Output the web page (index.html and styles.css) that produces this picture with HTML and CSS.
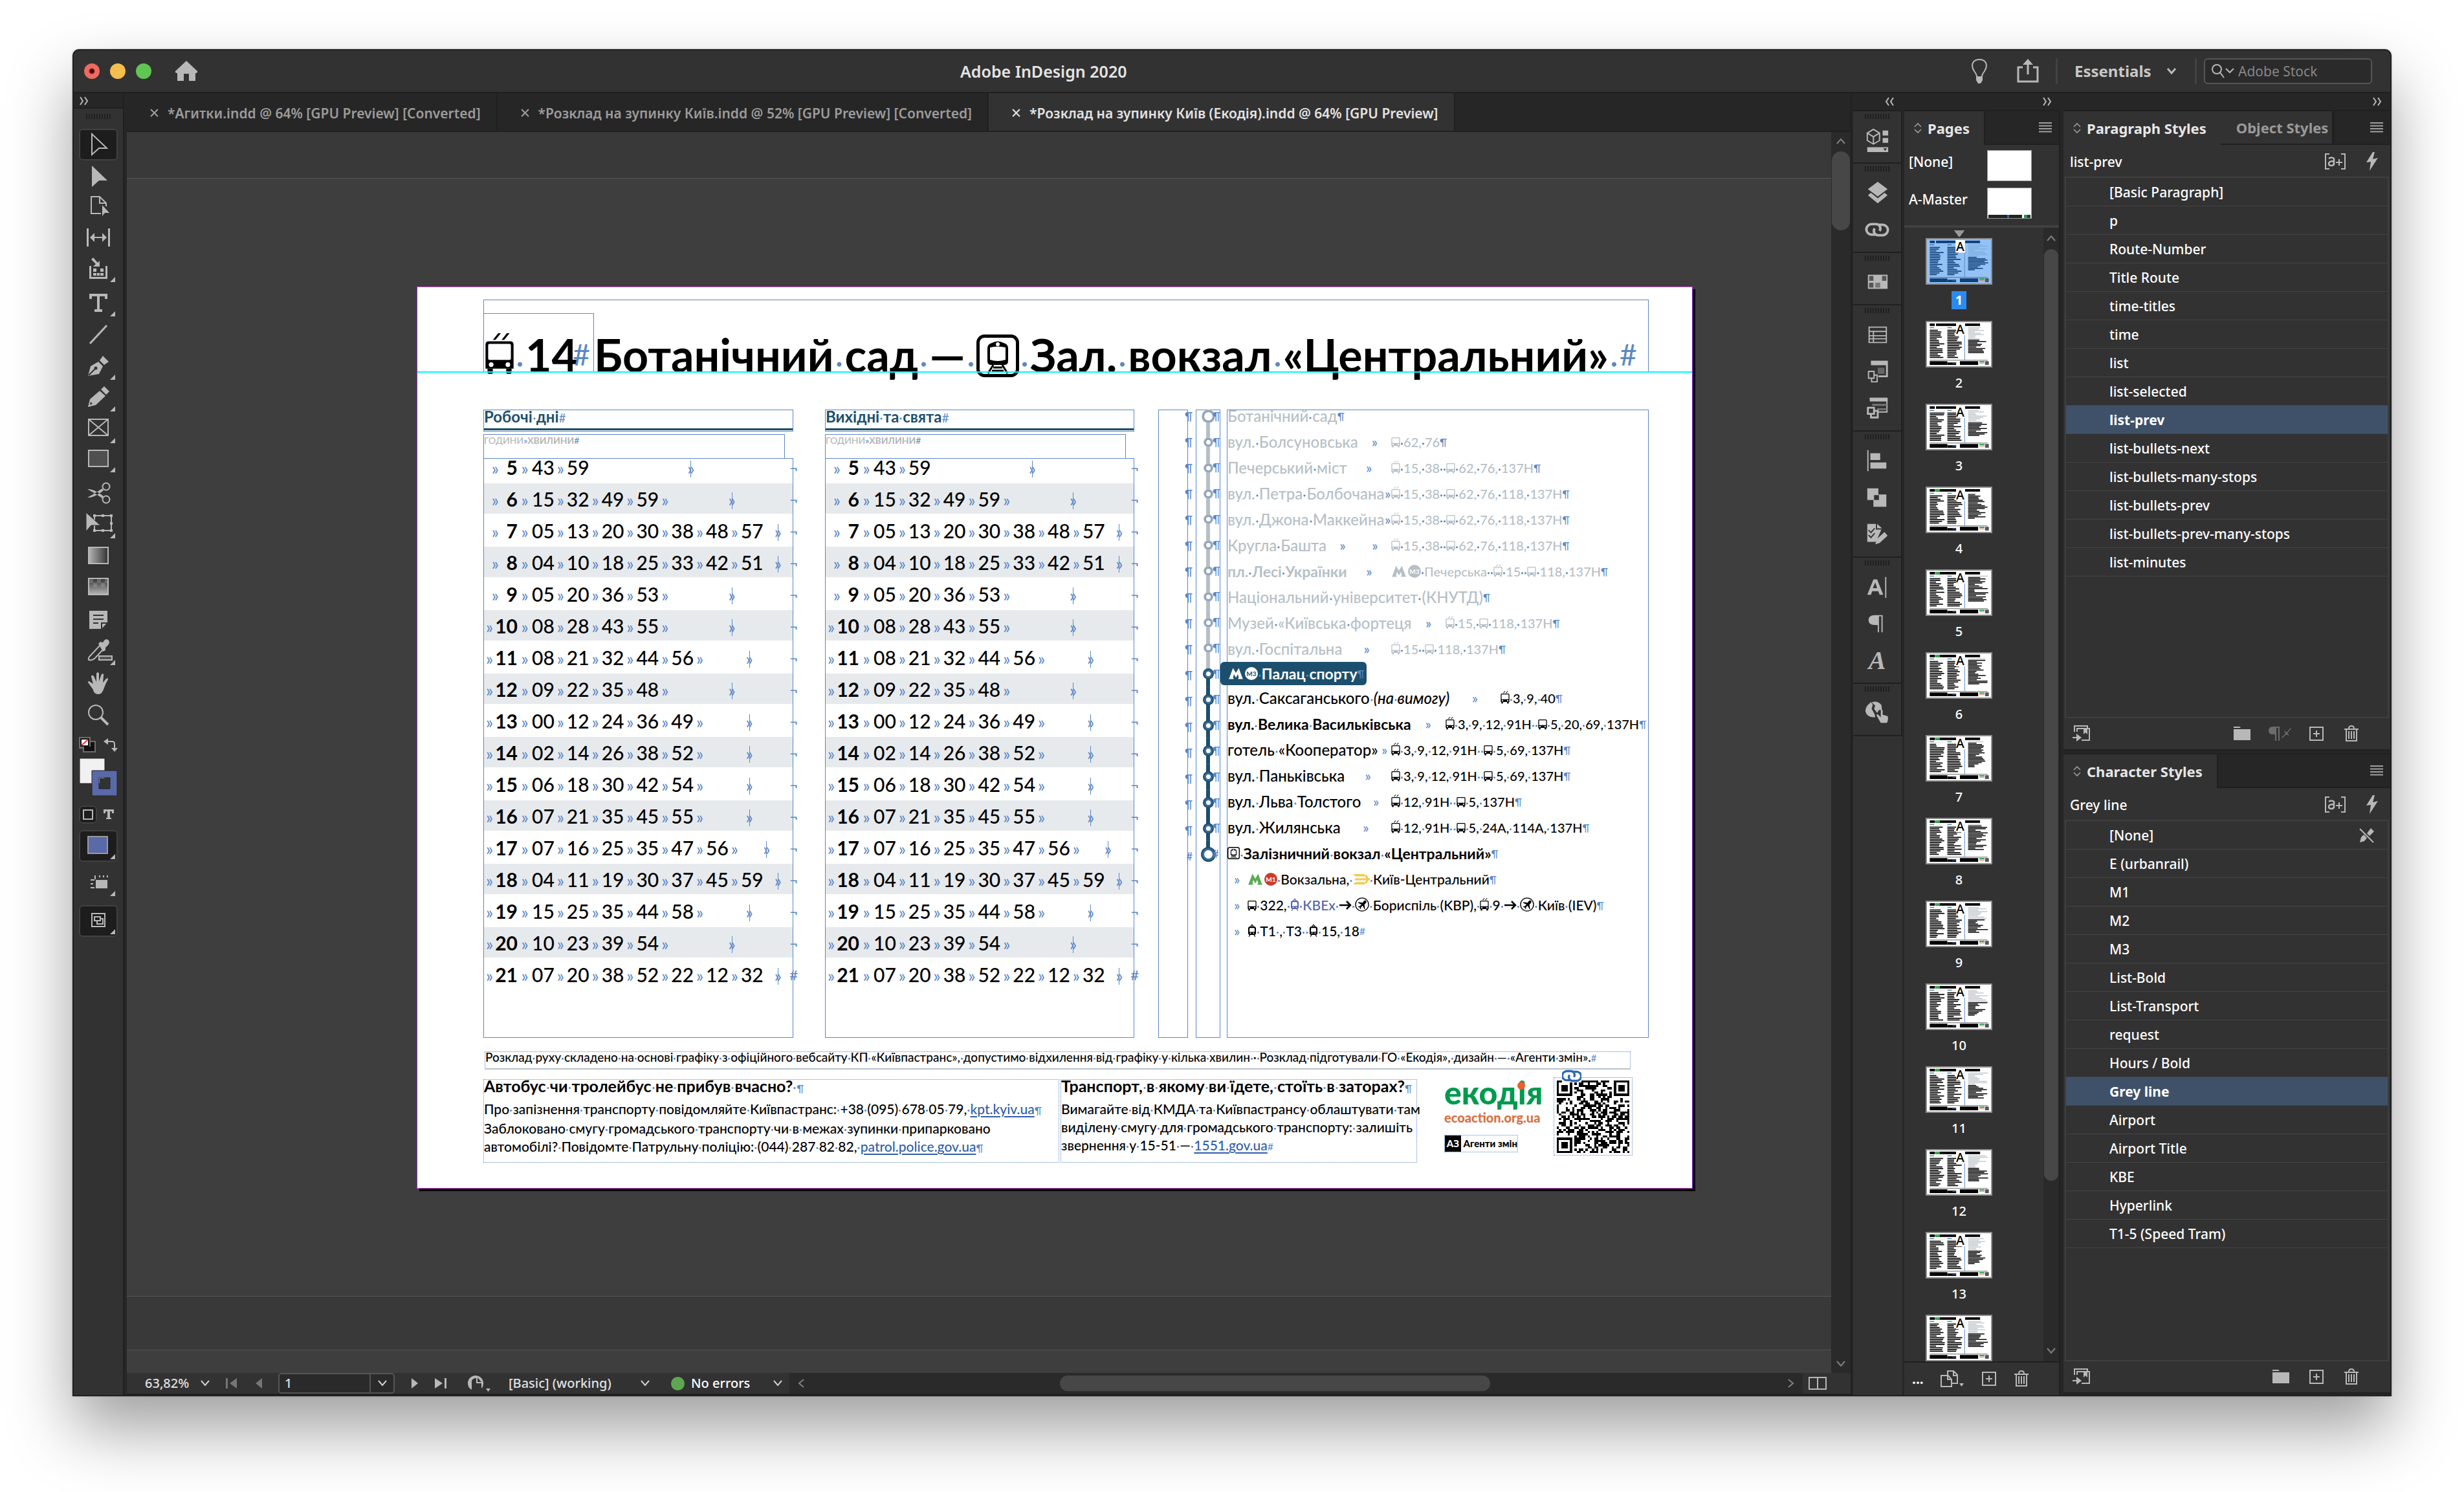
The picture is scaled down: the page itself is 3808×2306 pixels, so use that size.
FILE: index.html
```html
<!DOCTYPE html>
<html lang="uk">
<head>
<meta charset="utf-8">
<title>Adobe InDesign 2020</title>
<link rel="stylesheet" href="styles.css">
</head>
<body>
<svg class="defs" aria-hidden="true">
  <symbol id="chev" viewBox="0 0 16 16"><path d="M2 4l6 7 6-7" fill="none" stroke="currentColor" stroke-width="2"/></symbol>
  <symbol id="dbl" viewBox="0 0 16 16"><path d="M2 2l4 6-4 6M9 2l4 6-4 6" fill="none" stroke="currentColor" stroke-width="2"/></symbol>
  <symbol id="updown" viewBox="0 0 12 18"><path d="M1 7l5-5 5 5M1 11l5 5 5-5" fill="none" stroke="currentColor" stroke-width="1.6"/></symbol>
  <symbol id="menu" viewBox="0 0 20 16"><path d="M0 1h20M0 5.500h20M0 10h20M0 14.500h20" stroke="currentColor" stroke-width="2"/></symbol>
  <symbol id="close" viewBox="0 0 12 12"><path d="M1 1l10 10M11 1L1 11" stroke="currentColor" stroke-width="2"/></symbol>
  <symbol id="aplus" viewBox="0 0 34 26"><path d="M8 1H2v23h6M26 1h6v23h-6M23 9v10M18 14h10" fill="none" stroke="currentColor" stroke-width="2"/><path d="M7 8q4-3 8 0v10M15 12q-8 0-8 3.500t4 3.500 4-4" fill="none" stroke="currentColor" stroke-width="2.500"/></symbol>
  <symbol id="bolt" viewBox="0 0 20 30"><path d="M11 0L1 16l7-1-2 14L19 9l-8 2 3-11z" fill="currentColor"/></symbol>
  <symbol id="plus" viewBox="0 0 24 24"><path d="M2 2h20v20H2zM12 7v10M7 12h10" fill="none" stroke="currentColor" stroke-width="2"/></symbol>
  <symbol id="trash" viewBox="0 0 24 26"><path d="M1 6h22M8 5q0-4 4-4t4 4M4 7v17h16V7M8 9v12M12 9v12M16 9v12" fill="none" stroke="currentColor" stroke-width="2"/></symbol>
  <symbol id="folder" viewBox="0 0 26 22"><path d="M0 0h9l2 2H0zM0 4h26v17H0z" fill="currentColor"/></symbol>
  <symbol id="import" viewBox="0 0 28 28"><path d="M3 11V2h20v3M7 11V6h19v18H14M0 20h8" fill="none" stroke="currentColor" stroke-width="2"/><path d="M6 14l8 6-8 6zM17 6h6v9l-3-3-3 3z" fill="currentColor"/></symbol>
  <symbol id="link" viewBox="0 0 40 28"><g fill="none" stroke="currentColor" stroke-width="4"><path d="M17 22h-6a8 8 0 0 1 0-17h7a7 7 0 0 1 6 11"/><path d="M23 6h6a8 8 0 0 1 0 17h-7a7 7 0 0 1-6-11"/></g></symbol>
  <symbol id="buscab" viewBox="0 0 44 62"><path fill="currentColor" fill-rule="evenodd" d="M6 12h32q5 0 5 5v36H1V17q0-5 5-5zM5 18v20q0 2 2 2h30q2 0 2-2V18q0-2-2-2H7q-2 0-2 2zM6 47a3.500 3.500 0 1 0 7 0 3.500 3.500 0 1 0-7 0zM31 47a3.500 3.500 0 1 0 7 0 3.500 3.500 0 1 0-7 0z"/><path fill="currentColor" d="M4 53h8v6q0 2-4 2t-4-2zM32 53h8v6q0 2-4 2t-4-2z"/></symbol>
  <symbol id="trolley" viewBox="0 0 44 62"><path d="M12 10l8-10h4l-8 10zM25 10l8-10h4l-8 10z" fill="currentColor"/><use href="#buscab"/></symbol>
  <symbol id="bus" viewBox="0 0 44 62"><use href="#buscab"/></symbol>
  <symbol id="tram" viewBox="0 0 44 66"><path fill="none" stroke="currentColor" stroke-width="4" d="M15 12l7-8 7 8M12 55L6 65M32 55l6 10"/><path fill="currentColor" fill-rule="evenodd" d="M12 12h20q10 2 10 12v24q0 8-8 8H10q-8 0-8-8V24q0-10 10-12zM10 21l-2 18q8 4 28 0l-2-18zM11 47a3 3 0 1 0 6 0 3 3 0 1 0-6 0zM27 47a3 3 0 1 0 6 0 3 3 0 1 0-6 0z"/></symbol>
  <symbol id="station" viewBox="0 0 66 66"><rect x="2.500" y="2.500" width="61" height="61" rx="10" fill="none" stroke="currentColor" stroke-width="5"/><path fill="currentColor" fill-rule="evenodd" d="M24 13q9-5 18 0 7 2 7 8v20q0 6-6 6H23q-6 0-6-6V21q0-6 7-8zM21 20v19q12 4 24 0V20q-12-3-24 0zM30 15a3 3 0 1 0 6 0 3 3 0 1 0-6 0z"/><path stroke="currentColor" stroke-width="3" fill="none" d="M26 47l-8 13M40 47l8 13M26 51h14M24 56h18"/></symbol>
  <symbol id="metro" viewBox="0 0 44 36"><path fill="currentColor" d="M0 35l2-4L13 1l9 15L31 1l11 30 2 4H29v-3l2-1-3-11-6 11-6-11-3 11 2 1v3z"/></symbol>
  <symbol id="plane" viewBox="0 0 24 24"><circle cx="12" cy="12" r="11" fill="none" stroke="currentColor" stroke-width="1.500"/><path d="M18 5q-2 0-3 1l-2 3-7-1-1 1 6 3-3 3-2 0-1 1 3 1 1 3 1-1 0-2 3-3 3 6 1-1-1-7 3-3q1-2-1-4z" fill="currentColor"/></symbol>
  <symbol id="arrow" viewBox="0 0 20 16"><path d="M1 8h17M12 2l6 6-6 6" fill="none" stroke="currentColor" stroke-width="2.500"/></symbol>
  <symbol id="rail" viewBox="0 0 26 16"><path d="M0 0h17l4 3.500H4zM4 6.500h22v3H2zM4 12.500h17L17 16H0z" fill="currentColor"/><path d="M20 2l3 6-3 6" fill="none" stroke="currentColor" stroke-width="3"/></symbol>
</svg>

<div class="window">
  <header class="titlebar">
    <div class="titlebar-left">
      <button class="light red" aria-label="Close window"></button>
      <button class="light yellow" aria-label="Minimise"></button>
      <button class="light green" aria-label="Zoom window"></button>
      <button class="home" aria-label="Home"><svg width="36" height="32" viewBox="0 0 36 32"><path fill="currentColor" d="M18 0l17 16q1 3-3 3v12H22V20h-8v11H4V19q-4 0-3-3z"/></svg></button>
    </div>
    <h1 class="app-title">Adobe InDesign 2020</h1>
    <div class="titlebar-right">
      <button class="bulb" aria-label="Learn"><svg width="28" height="38" viewBox="0 0 28 38"><path d="M10 28q0-4-4-9C-1 7 6 1 14 1s15 6 8 18q-4 5-4 9" fill="none" stroke="currentColor" stroke-width="2"/><path d="M9 27h10v6l-3 5h-4l-3-5z" fill="currentColor"/></svg></button>
      <button class="share" aria-label="Share"><svg width="34" height="38" viewBox="0 0 34 38"><path d="M9 13H2v22h30V13h-7M17 24V6" fill="none" stroke="currentColor" stroke-width="3"/><path d="M17 0l8 9H9z" fill="currentColor"/></svg></button>
      <i class="sep"></i>
      <select class="workspace" aria-label="Workspace"><option>Essentials</option></select>
      <svg class="ic16" viewBox="0 0 16 16"><path d="M2 4l6 7 6-7" fill="none" stroke="currentColor" stroke-width="3"/></svg>
      <i class="sep sep2"></i>
      <label class="search"><svg width="40" height="24" viewBox="0 0 40 24"><circle cx="10" cy="9" r="7" fill="none" stroke="currentColor" stroke-width="2"/><path d="M15 14l6 8M24 8l6 6 6-6" fill="none" stroke="currentColor" stroke-width="2"/></svg><input type="text" placeholder="Adobe Stock" aria-label="Search Adobe Stock"></label>
    </div>
  </header>

  <div class="work">
    <nav class="tools" aria-label="Tools">
      <div class="tools-head"><svg class="ic16"><use href="#dbl"/></svg></div>
      <i class="grip"></i>
      <button class="tool on" aria-label="Selection"><svg viewBox="0 0 60 49"><path d="M20 8v32l11-10h12z" class="st"/></svg></button>
      <button class="tool" aria-label="Direct selection"><svg viewBox="0 0 60 49"><path d="M20 8v33l11-10h13z"/></svg></button>
      <button class="tool" aria-label="Page"><svg viewBox="0 0 60 49"><path d="M34 33H19V7h13l10 10v5M32 7v10h10" class="st"/><path d="M36 20v17l4-5h7z"/></svg></button>
      <button class="tool" aria-label="Gap"><svg viewBox="0 0 60 49"><path d="M12 7h3v28h-3zM45 7h3v28h-3zM17 21l7-7v6h12v-6l7 7-7 7v-6H24v6z"/></svg></button>
      <button class="tool" aria-label="Content collector"><svg viewBox="0 0 60 49"><path d="M16 16h3v17h22V16h3v20H16zM22 20h5v5h-5zM33 20h5v5h-5zM22 27h5v4h-5zM28 27h4v4h-4zM33 27h5v4h-5zM19 6l3-3 7 8 3-3v9H22l4-4z"/><path d="M56 33v8h-8z"/></svg></button>
      <button class="tool" aria-label="Type"><svg viewBox="0 0 60 49"><path d="M16 10h28v8h-4v-4h-8v20h4v4H24v-4h4V14h-8v4h-4z"/><path d="M56 37v8h-8z"/></svg></button>
      <button class="tool" aria-label="Line"><svg viewBox="0 0 60 49"><path d="M17 38L43 10" class="st w3"/></svg></button>
      <button class="tool" aria-label="Pen"><svg viewBox="0 0 60 49"><path d="M14 39l4-15 12-7 7 7-6 12zM32 15l5-7 9 9-7 5z"/><path d="M15 38l10-10" stroke="#323232" stroke-width="2"/><circle cx="26" cy="27" r="2.500" fill="#323232"/><path d="M56 37v8h-8z"/></svg></button>
      <button class="tool" aria-label="Pencil"><svg viewBox="0 0 60 49"><path d="M14 38l3-12L32 13l9 8-15 14zM34 11l5-5 8 8-5 5z"/><path d="M17 35l1-5 3 3z" fill="#323232"/><path d="M56 37v8h-8z"/></svg></button>
      <button class="tool" aria-label="Frame"><svg viewBox="0 0 60 49"><path d="M15 8h30v25H15zM15 8l30 25M45 8L15 33" class="st"/><path d="M56 37v8h-8z"/></svg></button>
      <button class="tool" aria-label="Rectangle"><svg viewBox="0 0 60 49"><path d="M16 8h28v23H16z" fill="#505050"/><path d="M15 7h30v25H15z" class="st"/><path d="M56 33v8h-8z"/></svg></button>
      <button class="tool" aria-label="Scissors"><svg viewBox="0 0 60 49"><circle cx="42" cy="14" r="5.500" class="st"/><circle cx="42" cy="34" r="5.500" class="st"/><path d="M13 18q10-1 25 11l-2 3Q24 24 13 18zM13 31q10 1 25-11l-2-3Q24 25 13 31z"/></svg></button>
      <button class="tool" aria-label="Free transform"><svg viewBox="0 0 60 49"><path d="M24 10h26v23H24z" class="st"/><path d="M11 5v29l8-9h14z" stroke="#323232"/><path d="M22 8h4v4h-4zM35 8h4v4h-4zM48 8h4v4h-4zM48 20h4v4h-4zM48 31h4v4h-4zM35 31h4v4h-4zM22 31h4v4h-4zM56 37v8h-8z"/></svg></button>
      <button class="tool" aria-label="Gradient swatch"><svg viewBox="0 0 60 49"><linearGradient id="g1"><stop stop-color="#b5b5b5"/><stop offset="1" stop-color="#333"/></linearGradient><path d="M15 10h30v25H15z" fill="url(#g1)"/><path d="M15 10h30v25H15z" class="st"/></svg></button>
      <button class="tool" aria-label="Gradient feather"><svg viewBox="0 0 60 49"><linearGradient id="g2" x2="0" y2="1"><stop stop-color="#333"/><stop offset="1" stop-color="#b5b5b5"/></linearGradient><path d="M15 9h30v25H15z" fill="url(#g2)"/><path d="M15 9h30v25H15z" class="st"/><path d="M16 10h6v6h-6zM28 10h6v6h-6zM22 16h6v6h-6zM34 16h6v6h-6zM40 10h4v6h-4z" opacity=".3"/></svg></button>
      <button class="tool" aria-label="Note"><svg viewBox="0 0 60 49"><path d="M16 10h28v18l-9 10H16z"/><path d="M22 17h16M22 23h16M22 29h8M35 38v-9h9" stroke="#323232" stroke-width="2" fill="none"/></svg></button>
      <button class="tool" aria-label="Eyedropper"><svg viewBox="0 0 60 49"><path d="M33 14L16 32q-3 6 1 5 4 1 8-3l14-15" class="st"/><path d="M30 12l3-3 4 1q4-7 8-4t0 8l-4 4v4l-4 2z"/><path d="M31 31h20v6H31z" fill="#555"/><path d="M31 31h20v6H31z" class="st"/><path d="M56 37v8h-8z"/></svg></button>
      <button class="tool" aria-label="Hand"><svg viewBox="0 0 60 49"><path d="M22 34L15 24q-3-3 1-3l6 4-3-11q0-4 4-1l4 9V9q2-4 4 0v12l4-11q4-2 3 2l-1 11 5-6q4-2 3 1-4 7-6 13-3 10-9 10-7 0-8-7z"/></svg></button>
      <button class="tool" aria-label="Zoom"><svg viewBox="0 0 60 49"><circle cx="26" cy="20" r="11" class="st"/><path d="M34 28l11 11" class="st w4"/></svg></button>
      <div class="swatches">
        <div class="swatch-top"><svg width="26" height="24" viewBox="0 0 26 24"><path d="M0 0h18v6h8v18H6v-6H0z" fill="#6e6e6e"/><path d="M2 2h14v13H2zM8 15v7h16V8h-6v7z" fill="#111"/><path d="M4 4h10v9H4z" fill="#fff"/><path d="M4 13L14 4" stroke="#e33" stroke-width="2"/></svg><svg width="22" height="24" viewBox="0 0 22 24"><path d="M4 7h9q4 0 4 4v6" fill="none" stroke="#b8b8b8" stroke-width="2"/><path d="M0 7l7-5v10zM17 23l-5-6h10z" fill="#b8b8b8"/></svg></div>
        <svg class="fillstroke" width="60" height="60" viewBox="0 0 60 60"><path d="M1 1h39v39H1z" fill="#f1f1f1" stroke="#222"/><path d="M20 20h39v39H20zM31 31v17h17V31z" fill="#5a69a8" stroke="#222" fill-rule="evenodd"/><path d="M32 32h15v15H32z" fill="#323232"/></svg>
        <div class="swatch-mini"><button class="mini on" aria-label="Formatting affects container"><svg width="16" height="16"><path d="M1 1h14v14H1z" class="st"/></svg></button><button class="mini" aria-label="Formatting affects text"><svg width="16" height="16"><path d="M0 0h16v6h-3V3h-3v10h2v2H4v-2h2V3H3v3H0z"/></svg></button></div>
      </div>
      <button class="tool box on" aria-label="Apply colour"><svg viewBox="0 0 60 49"><path d="M14 10h30v26H14z" fill="#5a69a8" stroke="#999" stroke-width="2"/><path d="M56 37v8h-8z"/></svg></button>
      <button class="tool mid" aria-label="View options"><svg viewBox="0 0 60 49"><path d="M26 20h18v13H26zM18 19h6v2h-6zM18 25h4v2h-4zM18 31h6v2h-6zM24 13h2v6h-2zM31 13h2v3h-2zM37 13h2v3h-2zM43 13h2v3h-2zM56 37v8h-8z"/></svg></button>
      <button class="tool box on" aria-label="Screen mode"><svg viewBox="0 0 60 49"><path d="M20 13h20v20H20z" class="st"/><path d="M24 18h9v6h-9zM28 24v5h9v-8h-4" class="st"/><path d="M56 37v8h-8z"/></svg></button>
    </nav>

    <main class="doc">
      <div class="doctabs">
        <button class="doctab"><svg class="x"><use href="#close"/></svg>*Агитки.indd @ 64% [GPU Preview] [Converted]</button>
        <button class="doctab"><svg class="x"><use href="#close"/></svg>*Розклад на зупинку Київ.indd @ 52% [GPU Preview] [Converted]</button>
        <button class="doctab on"><svg class="x"><use href="#close"/></svg>*Розклад на зупинку Київ (Екодія).indd @ 64% [GPU Preview]</button>
      </div>
      <div class="canvas-row">
        <div class="canvas">
          <div class="gap-top"></div>
          <div class="spread">
            <article class="page">
              <h2 class="title" data-hidden>
                <span class="route"><svg width="46" height="64"><use href="#trolley"/></svg> 14<b class="m">#</b></span>
                <span class="dest">Ботанічний сад — <svg width="66" height="66"><use href="#station"/></svg> Зал. вокзал «Центральний» <b class="m">#</b></span>
              </h2>
              <i class="guide"></i>
              <div class="content">
                <section class="day"><h3 class="day-head" data-hidden>Робочі дні<b class="m">#</b></h3>
                  <p class="cap">ГОДИНИ<b class="m">»</b><strong>ХВИЛИНИ</strong><b class="m">#</b></p>
                  <div class="times"><table class="timetable"></table></div></section>
                <section class="day day-off"><h3 class="day-head" data-hidden>Вихідні та свята<b class="m">#</b></h3>
                  <p class="cap">ГОДИНИ<b class="m">»</b><strong>ХВИЛИНИ</strong><b class="m">#</b></p>
                  <div class="times"><table class="timetable"></table></div></section>
                <div class="col-marks"></div>
                <div class="col-line"></div>
                <div class="col-stops"><ol class="stops"></ol></div>
              </div>
              <p class="note" data-hidden>Розклад руху складено на основі графіку з офіційного вебсайту КП «Київпастранс», допустимо відхилення від графіку у кілька хвилин · Розклад підготували ГО «Екодія», дизайн — «Агенти змін».<b class="m">#</b></p>
              <footer class="foot">
                <section class="foot-a" data-hidden><h4>Автобус чи тролейбус не прибув вчасно? <b class="m">¶</b></h4><p>Про запізнення транспорту повідомляйте Київпастранс: +38 (095) 678 05 79, <a href="#kpt">kpt.kyiv.ua</a><b class="m">¶</b><br>Заблоковано смугу громадського транспорту чи в межах зупинки припарковано <br>автомобілі? Повідомте Патрульну поліцію: (044) 287 82 82, <a href="#police">patrol.police.gov.ua</a><b class="m">¶</b></p></section>
                <section class="foot-b" data-hidden><h4>Транспорт, в якому ви їдете, стоїть в заторах?<b class="m">¶</b></h4><p>Вимагайте від КМДА та Київпастрансу облаштувати там <br>виділену смугу для громадського транспорту: залишіть <br>звернення у 15-51 — <a href="#1551">1551.gov.ua</a><b class="m">#</b></p></section>
                <section class="logos"><div class="eko">екодія<i></i></div><div class="eco-url">ecoaction.org.ua</div><div class="agents"><b>АЗ</b><span>Агенти змін</span></div></section>
                <div class="qr-frame"><svg class="qr" viewBox="0 0 33 33" width="112" height="112" shape-rendering="crispEdges"></svg><svg class="qr-link" width="30" height="20" viewBox="3 2 34 24"><use href="#link" width="40" height="28"/></svg></div>
              </footer>
            </article>
          </div>
          <div class="gap-bottom"></div>
          <div class="next"></div>
        </div>
        <div class="vscroll"><svg class="ic16 up"><use href="#chev"/></svg><i></i><svg class="ic16 down"><use href="#chev"/></svg></div>
      </div>
      <div class="status">
        <select class="zoom" aria-label="Zoom level"><option>63,82%</option></select><svg class="ic16"><use href="#chev"/></svg>
        <button class="nav first dim" aria-label="First page"><svg width="18" height="18"><path d="M0 1h3v16H0zM17 1v16L6 9z"/></svg></button>
        <button class="nav prev dim" aria-label="Previous page"><svg width="10" height="18"><path d="M10 1v16L0 9z"/></svg></button>
        <label class="pageno"><input type="text" value="1" aria-label="Page"><span><svg class="ic16"><use href="#chev"/></svg></span></label>
        <button class="nav" aria-label="Next page"><svg width="10" height="18"><path d="M0 1v16l10-8z"/></svg></button>
        <button class="nav last-p" aria-label="Last page"><svg width="18" height="18"><path d="M15 1h3v16h-3zM0 1v16l12-8z"/></svg></button>
        <button class="nav pre" aria-label="Preflight"><svg width="36" height="28" viewBox="0 0 36 28"><path fill-rule="evenodd" d="M13 2a12 12 0 0 1 12 12q0 5-3 8v-8h-8V6q-5 0-7 4v14q-6-3-6-10A12 12 0 0 1 13 2zM16 5v7h6zM29 22h7l-3.500 5z"/></svg></button>
        <select class="profile" aria-label="Preflight profile"><option>[Basic] (working)</option></select><svg class="ic16"><use href="#chev"/></svg>
        <i class="ok"></i>
        <select class="errors" aria-label="Errors"><option>No errors</option></select><svg class="ic16"><use href="#chev"/></svg>
        <div class="hscroll"><svg class="ic16 lf"><use href="#chev"/></svg><i></i><svg class="ic16 rt"><use href="#chev"/></svg></div>
        <button class="split" aria-label="Split layout"><svg width="30" height="22"><path d="M2 2h26v18H2zM15 2v18" class="st"/></svg></button>
      </div>
    </main>

    <aside class="docks">
      <div class="dock-head"><svg class="ic16 flip"><use href="#dbl"/></svg><svg class="ic16"><use href="#dbl"/></svg><svg class="ic16"><use href="#dbl"/></svg></div>
      <div class="dock-body">
        <div class="rail">
          <div class="rg"><i class="grip"></i><button aria-label="Properties"><svg viewBox="0 0 40 40"><path d="M4 8l10-6 10 6v12l-10 6-10-6zM4 8l10 6 10-6M14 14v12" class="st"/><path d="M29 4h9v8h-9zM29 16h9v8h-9zM4 31h34v8H4z"/><path d="M30 33h6l-3 4z" fill="#323232"/></svg></button></div>
          <div class="rg"><i class="grip"></i><button aria-label="Layers"><svg viewBox="0 0 40 40"><path d="M21 2l16 12-16 12L5 14zM5 24l5-4 11 9 11-9 5 4-16 13z"/></svg></button><button aria-label="Links"><svg viewBox="0 0 40 28"><use href="#link"/></svg></button></div>
          <div class="rg"><i class="grip"></i><button aria-label="Swatches"><svg viewBox="0 0 40 40"><path d="M5 8h32v23H5z"/><path d="M7 10h7v8H7zM28 10h7v8h-7zM7 21h7v8H7z" fill="#555"/><path d="M17 21h8v8h-8z" fill="#777"/></svg></button></div>
          <div class="rg"><i class="grip"></i><button aria-label="Paragraph styles"><svg viewBox="0 0 40 40"><path d="M7 8h28v25H7zM7 15h28M7 22h28M7 27h28M14 15v18" class="st"/></svg></button><button aria-label="Cell styles"><svg viewBox="0 0 40 40"><path d="M10 4h26v24H22" class="st w3"/><path d="M10 4h26v6H10z"/><path d="M21 14h11v10H21z" fill="#666"/><path d="M6 20h9v11H6zM11 31v6h9V26h-5" class="st"/></svg></button><button aria-label="Table styles"><svg viewBox="0 0 40 40"><path d="M8 4h28v22H22" class="st"/><path d="M8 3h29v6H8z"/><path d="M12 13h24v3H12zM20 20h16v3H20z" fill="#777"/><path d="M5 19h10v10H5zM10 29v6h11V24h-6" class="st w3"/></svg></button></div>
          <div class="rg"><i class="grip"></i><button aria-label="Align"><svg viewBox="0 0 40 40"><path d="M4 3h2v34H4zM9 8h16v11H9zM9 23h26v10H9z"/></svg></button><button aria-label="Pathfinder"><svg viewBox="0 0 40 40"><path fill-rule="evenodd" d="M4 5h18v10h13v20H14V24H4zM15 16v8h8v-8z"/></svg></button><button aria-label="Preflight review"><svg viewBox="0 0 40 40"><path d="M4 3h14v9h9l-9 20H4zM20 3l8 7h-8zM17 36l3-9 12-11 5 6-13 12z"/><path d="M6 13l4 4 6-7M6 21l4 4 6-7" stroke="#323232" stroke-width="2" fill="none"/></svg></button></div>
          <div class="rg"><i class="grip"></i><button aria-label="Character"><svg viewBox="0 0 40 40"><path fill-rule="evenodd" d="M4 33L14 8h6l10 25h-6l-2-6H12l-2 6zM13 22h7l-3-9z"/><path d="M33 4h2v34h-2z"/></svg></button><button aria-label="Paragraph"><svg viewBox="0 0 40 40"><path d="M6 14q0-8 10-8h13v28h-2V8h-4v26h-2V22h-5q-10 0-10-8z"/></svg></button><button aria-label="Glyphs"><span class="script-a">A</span></button></div>
          <div class="rg"><i class="grip"></i><button aria-label="Hyperlinks"><svg viewBox="0 0 40 40"><path d="M4 8l6-6 3 5-2 6 5 9 1 5Q3 27 1 17q0-5 3-9zM11 3q9-4 16 4l1 8-5 0-3 5-5-7 2-5zM19 24q0-3 3-1l4 4V16q0-3 3 0v7l8 2q2 5-1 11H26z"/></svg></button></div>
        </div>

        <section class="pages">
          <header class="ptabs"><h2 class="ptab on"><svg class="ud"><use href="#updown"/></svg>Pages</h2><span class="pfill"><svg class="mn"><use href="#menu"/></svg></span></header>
          <div class="masters"><div><span>[None]</span><i class="mthumb"></i></div><div><span>A-Master</span><i class="mthumb m2"></i></div></div>
          <div class="pages-row"><ol class="pagelist"></ol><div class="pscroll"><svg class="ic16 up"><use href="#chev"/></svg><i></i><svg class="ic16 down"><use href="#chev"/></svg></div></div>
          <footer class="pfoot pages-foot"><span class="dots">...</span><button aria-label="Page size"><svg width="38" height="28"><path d="M2 9h11l5 6v11H2zM12 8V2h9l6 6v13h-8M21 2v7h6M12 9v6h6" class="st"/><path d="M30 21h7l-3.500 5z"/></svg></button><button aria-label="New page"><svg width="24" height="24"><use href="#plus"/></svg></button><button aria-label="Delete page"><svg width="24" height="26"><use href="#trash"/></svg></button></footer>
        </section>

        <div class="styles-col">
          <section class="stylep para">
            <header class="ptabs"><h2 class="ptab on"><svg class="ud"><use href="#updown"/></svg>Paragraph Styles</h2><h2 class="ptab off">Object Styles</h2><span class="pfill"><svg class="mn"><use href="#menu"/></svg></span></header>
            <div class="current"><span>list-prev</span><svg width="34" height="26"><use href="#aplus"/></svg><svg width="20" height="30"><use href="#bolt"/></svg></div>
            <ul class="slist">
              <li><button>[Basic Paragraph]</button></li><li><button>p</button></li><li><button>Route-Number</button></li><li><button>Title Route</button></li><li><button>time-titles</button></li><li><button>time</button></li><li><button>list</button></li><li><button>list-selected</button></li><li class="on"><button>list-prev</button></li><li><button>list-bullets-next</button></li><li><button>list-bullets-many-stops</button></li><li><button>list-bullets-prev</button></li><li><button>list-bullets-prev-many-stops</button></li><li><button>list-minutes</button></li>
            </ul>
            <footer class="pfoot"><button aria-label="Load styles"><svg width="28" height="28"><use href="#import"/></svg></button><i class="grow"></i><button aria-label="New group"><svg width="26" height="22"><use href="#folder"/></svg></button><button class="dim" aria-label="Clear overrides"><svg width="36" height="24"><path d="M0 7q0-6 7-6h10v22h-2V3h-3v20h-2V13H7q-7 0-7-6zM20 18l6-6-2-5 4 3 6-7 1 1-6 7 3 4-5-2-6 6z"/></svg></button><button aria-label="New style"><svg width="24" height="24"><use href="#plus"/></svg></button><button aria-label="Delete style"><svg width="24" height="26"><use href="#trash"/></svg></button></footer>
          </section>
          <section class="stylep char">
            <header class="ptabs"><h2 class="ptab on"><svg class="ud"><use href="#updown"/></svg>Character Styles</h2><span class="pfill"><svg class="mn"><use href="#menu"/></svg></span></header>
            <div class="current"><span>Grey line</span><svg width="34" height="26"><use href="#aplus"/></svg><svg width="20" height="30"><use href="#bolt"/></svg></div>
            <ul class="slist">
              <li><button>[None]</button><svg class="nopen" width="24" height="24"><path d="M1 23l2-8 4-4 5 5-4 5zM12 9l6-8 5 5-7 7z"/><path d="M1 2l21 21" stroke="#b8b8b8" stroke-width="2"/></svg></li><li><button>E (urbanrail)</button></li><li><button>M1</button></li><li><button>M2</button></li><li><button>M3</button></li><li><button>List-Bold</button></li><li><button>List-Transport</button></li><li><button>request</button></li><li><button>Hours / Bold</button></li><li class="on"><button>Grey line</button></li><li><button>Airport</button></li><li><button>Airport Title</button></li><li><button>KBE</button></li><li><button>Hyperlink</button></li><li><button>T1-5 (Speed Tram)</button></li>
            </ul>
            <footer class="pfoot"><button aria-label="Load styles"><svg width="28" height="28"><use href="#import"/></svg></button><i class="grow"></i><button aria-label="New group"><svg width="26" height="22"><use href="#folder"/></svg></button><button aria-label="New style"><svg width="24" height="24"><use href="#plus"/></svg></button><button aria-label="Delete style"><svg width="24" height="26"><use href="#trash"/></svg></button></footer>
          </section>
        </div>
      </div>
    </aside>
  </div>
</div>
<script src="script.js"></script>
</body>
</html>
```
FILE: styles.css
```css
:root {
  --panel: #323232;
  --dark: #262626;
  --line: #202020;
  --rule: #3f3f3f;
  --icon: #b8b8b8;
  --mark: #5b87c6;
  --deep: #1c4f6d;
  --grey: #b6bfc6;
}
* { box-sizing: border-box; }
body { margin: 0; padding: 76px 112px 148px; background: #fff; font: 500 21px/28px "Noto Sans", sans-serif; color: #fff; }
h1, h2, h3, h4, p, ul, ol { margin: 0; padding: 0; font: inherit; list-style: none; }
button, select, input { margin: 0; padding: 0; border: 0; background: none; color: inherit; font: inherit; appearance: none; }
svg { display: block; flex: none; fill: currentColor; }
.defs { position: absolute; width: 0; height: 0; }
.st { fill: none; stroke: currentColor; stroke-width: 2; }
.w3 { stroke-width: 3; }
.w4 { stroke-width: 4; }
.ic16 { width: 16px; height: 16px; color: var(--icon); }
.up { transform: rotate(180deg); }
.lf { transform: rotate(90deg); }
.rt { transform: rotate(-90deg); }
.flip { transform: scaleX(-1); }
.dim { color: #767676; }
.grow { flex: 1; }

.window { display: flex; flex-direction: column; height: calc(100vh - 224px); background: var(--panel); border-radius: 10px 10px 0 0; border: 2px solid var(--line); box-shadow: 0 0 2px rgba(0,0,0,.5), 0 50px 100px rgba(0,0,0,.38); }

.titlebar { display: flex; align-items: center; height: 64px; color: var(--icon); border-radius: 10px 10px 0 0; }
.titlebar-left { display: flex; align-items: center; flex: 0 0 1370px; padding-left: 16px; }
.light { width: 24px; height: 24px; margin-right: 16px; border-radius: 50%; }
.red { background: radial-gradient(circle, #4d0000 3px, #ed6b5f 5px); }
.yellow { background: #f5bf4f; }
.green { background: #61c554; }
.home { margin-left: 20px; color: var(--icon); }
.app-title { font-size: 25px; font-weight: 600; line-height: 32px; color: #e4e4e4; }
.titlebar-right { display: flex; align-items: center; margin-left: auto; padding-right: 28px; }
.share { margin-left: 44px; }
.sep { width: 3px; height: 40px; margin: 0 26px; background: #424242; }
.sep2 { margin: 0 11px 0 28px; }
.workspace { width: 142px; font-size: 24px; font-weight: 700; color: #c8c8c8; }
.search { display: flex; align-items: center; width: 260px; height: 40px; padding-left: 8px; border: 2px solid #555; border-radius: 6px; background: #2a2a2a; }
.search input { width: 180px; margin-left: 3px; font-size: 21px; font-weight: 400; }
.search input::placeholder { color: #868686; }

.work { display: flex; flex: 1; min-height: 0; border-top: 2px solid var(--line); background: var(--dark); }
.grip { display: block; width: 38px; height: 8px; margin: 0 auto; background: repeating-linear-gradient(90deg, #1f1f1f 0 2px, transparent 2px 4px); }

.tools { display: flex; flex-direction: column; align-items: center; flex: none; width: 78px; margin-right: 4px; border-right: 2px solid var(--line); background: var(--panel); color: var(--icon); }
.tools-head { align-self: stretch; height: 24px; padding: 4px 8px; margin-bottom: 8px; background: var(--dark); border-bottom: 2px solid var(--line); }
.tools .grip { margin-bottom: 15px; }
.tool { display: flex; width: 60px; height: 49px; border-radius: 6px; }
.tool svg { width: 60px; height: 49px; }
.tool.on { background: #1d1d1d; box-shadow: inset 0 0 0 2px #414141; }
.swatches { width: 60px; margin-top: 9px; }
.swatch-top { display: flex; justify-content: space-between; }
.fillstroke { margin-top: 8px; }
.swatch-mini { display: flex; gap: 4px; margin-top: 14px; }
.mini { display: flex; align-items: center; justify-content: center; width: 30px; height: 28px; border-radius: 6px; }
.mini.on { background: #1d1d1d; box-shadow: inset 0 0 0 2px #414141; }
.tool.box { margin-top: 10px; }
.tool.mid { margin-top: 8px; }

.doc { display: flex; flex-direction: column; flex: 1; min-width: 0; }
.doctabs { display: flex; height: 60px; border-bottom: 2px solid var(--line); background: var(--dark); }
.doctab { display: flex; align-items: center; gap: 14px; padding: 3px 24px 0 36px; font-size: 21px; font-weight: 600; color: #9b9b9b; border-right: 2px solid var(--line); white-space: nowrap; }
.doctab.on { background: var(--panel); color: #e2e2e2; }
.x { width: 13px; height: 13px; }
.canvas-row { display: flex; flex: 1; min-height: 0; }
.canvas { display: flex; flex-direction: column; flex: 1; background: #3e3e3e; overflow: hidden; }
.gap-top { height: 71px; background: #393939; }
.spread { flex: 1; padding: 167px 0 0 448px; border: solid #555; border-width: 1px 0; }
.gap-bottom { height: 82px; background: #393939; }
.next { height: 36px; border-top: 1px solid #555; }
.vscroll { display: flex; flex-direction: column; align-items: center; width: 30px; padding: 6px 0; background: #2a2a2a; }
.vscroll i { width: 28px; height: 122px; margin-top: 8px; border-radius: 14px; background: #474747; }
.vscroll .down { margin-top: auto; }
.vscroll .ic16, .status .hscroll .ic16, .pscroll .ic16 { color: #808080; }

.page { position: relative; width: 1972px; height: 1394px; padding: 19px 67px 0 102px; background: #fff; color: #000; border: 1px solid #8f2be8; border-top-color: #f04bf0; border-bottom-color: #f04bf0; box-shadow: 4px 4px 0 #000; font-family: Lato, sans-serif; white-space: nowrap; }
.m { color: var(--mark); font-weight: 400; }
.sp { background: radial-gradient(circle at 50% 62%, var(--mark) 1px, transparent 2px); }
.guide { position: absolute; left: 0; right: 0; top: 130px; height: 2px; background: #00f6ff; }
.title { display: flex; height: 112px; border: 1px solid var(--mark); font-size: 70px; font-weight: 700; line-height: 54px; white-space: pre; }
.title > span { display: flex; align-items: flex-end; height: 111px; }
.title svg { margin-bottom: -8px; }
.title .sp { background-image: radial-gradient(circle at 50% 68%, var(--mark) 3px, transparent 4px); }
.title .route { width: 170px; height: 91px; margin-top: 20px; padding-left: 1px; border: solid var(--mark); border-width: 1px 1px 0 0; }
.title .route svg { margin-bottom: -4px; }
.title .route .m { margin-left: -8px; }
.title .m { font-size: 46px; }

.content { display: grid; grid-template-columns: 479px 527px 83px 50px 1fr; margin-top: 58px; height: 971px; }
.day { display: flex; flex-direction: column; }
.day-off { margin-left: 49px; }
.day-head { height: 34px; border: 1px solid var(--mark); font-size: 24px; font-weight: 700; line-height: 19px; color: var(--deep); background: linear-gradient(var(--deep), var(--deep)) 0 28px / 100% 3px no-repeat; }
.day-head .m { font-size: 19px; }
.cap { height: 38px; margin: 4px 13px -1px 0; border: 1px solid var(--mark); font-size: 14px; line-height: 17px; color: #b4b4b4; }
.times { flex: 1; border: 1px solid var(--mark); }
.timetable { display: block; margin-top: -11px; font-size: 30px; line-height: 49px; }
.timetable tbody { display: block; }
.timetable tr { position: relative; display: flex; height: 49px; }
.timetable tr:nth-child(even) { background: linear-gradient(#e7eaed, #e7eaed) 0 0 / 100% 47px no-repeat; }
.timetable th { display: flex; flex: 0 0 74px; padding: 0; font-weight: 700; }
.timetable td { display: flex; padding: 0; }
.tab { flex: 1; text-align: center; color: var(--mark); font-size: 24px; font-weight: 400; font-style: normal; line-height: inherit; }
.timetable .tab { padding-top: 2px; font-size: 26px; }
.timetable th .tab:last-child { flex: 0 0 22px; }
.timetable td .tab { flex: 0 0 19px; }
.timetable td.rest { flex: 1; }
.timetable td.rest .tab { flex: 1; background: linear-gradient(var(--mark), var(--mark)) 50% 14px / 1px 26px no-repeat; }
.eol { position: absolute; right: -8px; color: var(--mark); font-size: 22px; }

.col-marks, .col-line, .col-stops { border: 1px solid var(--mark); }
.col-marks { margin-left: 37px; }
.col-line { margin-left: 12px; }
.col-stops { margin-left: 10px; }
.col-marks ol, .col-line ol { display: grid; grid-auto-rows: 1fr; height: 716px; margin-top: -10px; color: var(--mark); font-size: 17px; line-height: 40px; }
.col-marks li { margin-right: -8px; text-align: right; }
.col-line li { position: relative; display: flex; align-items: center; justify-content: center; background: linear-gradient(var(--grey), var(--grey)) center / 6px 100% no-repeat; }
.col-line li i { width: 13px; height: 13px; border: 3px solid #8fa5bf; border-radius: 50%; background: #fff; box-shadow: 0 0 0 1px var(--grey); }
.col-line li.ahead { background-image: linear-gradient(var(--deep), var(--deep)); }
.col-line li.ahead i { border-color: #3c6c98; box-shadow: 0 0 0 2px var(--deep); }
.col-line li.here { background-image: linear-gradient(var(--grey) 50%, var(--deep) 50%); }
.col-line li.start { background-size: 6px 50%; background-position: center bottom; }
.col-line li.end { background-size: 6px 50%; background-position: center top; }
.col-line li.start i, .col-line li.end i { width: 19px; height: 19px; }
.col-line li b { position: absolute; left: 25px; font-weight: 400; }
.stops { display: grid; grid-auto-rows: 1fr; height: 836px; margin-top: -11px; font-size: 24px; line-height: 40px; white-space: pre; }
.stops li { display: flex; align-items: center; }
.stops .gone { color: var(--grey); }
.stops .lead { display: flex; width: 253px; }
.stops .wide .lead { width: 337px; }
.stops .wider .lead { width: 422px; }
.stops .bold .lead { font-size: 23px; font-weight: 700; }
.stops .tab { font-size: 22px; font-weight: 400; }
.stops .r { display: flex; font-size: 20px; font-weight: 500; }
.stops svg { width: 14px; height: 20px; margin: 9px 0; }
.stops .metro { width: 24px; height: 18px; margin: 11px 2px 11px 0; }
.stops .disc { display: block; align-self: center; width: 20px; height: 20px; border-radius: 50%; background: currentColor; font-size: 10px; line-height: 20px; text-align: center; font-weight: 700; }
.stops .disc span { color: #fff; }
.stops .rd { align-self: center; }
.stops .m { font-size: 16px; }
.stops .pill { display: flex; align-items: center; width: 226px; height: 36px; margin-left: -11px; padding-left: 12px; border-radius: 6px; background: var(--deep); color: #fff; font-size: 23px; font-weight: 700; line-height: 34px; }
.stops .pill .disc span { color: var(--deep); }
.stops .term { display: flex; font-size: 23px; font-weight: 700; }
.stops .term svg { width: 19px; height: 19px; margin-top: 10px; }
.stops .sub { padding-left: 10px; }
.stops .sub .tab { flex: 0 0 21px; text-align: left; }
.stops .sub .r { font-size: 21px; }
.stops .plane { width: 22px; height: 22px; margin: 8px 0; }
.stops .arrow { width: 20px; height: 16px; margin: 12px 0; }
.stops .rail-e { width: 26px; height: 16px; margin: 12px 0; color: #f7c948; }
.gr { color: #5bab55; }
.rd { color: #cf3a2b; }
.vi { color: #5564ae; }

.note { width: 1771px; height: 28px; margin: 21px 0 0 2px; border: 1px dotted var(--mark); border-bottom: 2px solid #b9c1ca; font-size: 19px; line-height: 15px; }
.note .m { font-size: 15px; }
.foot { display: flex; margin-top: 12px; }
.foot-a, .foot-b { height: 129px; margin-top: 3px; border: 1px dotted var(--mark); }
.foot-a { width: 890px; }
.foot-b { width: 551px; margin-left: 2px; }
.foot h4 { height: 31px; font-size: 25px; font-weight: 700; line-height: 18px; }
.foot p { font-size: 21px; line-height: 28px; }
.foot .m { font-size: 16px; }
.foot a { color: #2f5fa8; text-underline-offset: 3px; }
.logos { width: 154px; margin: 0 15px 0 42px; }
.eko { position: relative; height: 52px; font-size: 50px; font-weight: 900; line-height: 46px; color: #009a4e; }
.eko i { position: absolute; left: 113px; top: 7px; width: 12px; height: 12px; border-radius: 50%; background: #e8622c; }
.eco-url { height: 37px; font-size: 20px; font-weight: 900; line-height: 20px; color: #d9703f; }
.agents { display: flex; align-items: center; width: 114px; height: 27px; border: 1px dotted var(--mark); font-size: 15px; font-weight: 900; line-height: 25px; }
.agents b { width: 25px; margin-right: 4px; background: #000; color: #fff; text-align: center; }
.qr-frame { position: relative; width: 122px; height: 121px; padding: 4px; border: 1px dotted var(--mark); }
.qr-link { position: absolute; left: 12px; top: -13px; background: #fff; color: #2e68b5; }

.status { display: flex; align-items: center; height: 34px; padding-left: 28px; background: var(--panel); border-bottom: 2px solid var(--line); font-size: 20px; color: #e0e0e0; }
.status .ic16 { color: #d0d0d0; }
.zoom { width: 85px; }
.nav { color: var(--icon); }
.nav.dim { color: #767676; }
.first { margin-left: 24px; }
.prev { margin-left: 28px; }
.pageno { display: flex; align-items: center; width: 180px; height: 32px; margin: 0 26px 0 25px; border: 2px solid #555; border-radius: 5px; background: #2a2a2a; }
.pageno input { width: 141px; height: 28px; padding-left: 8px; border-right: 2px solid #555; }
.pageno span { padding-left: 10px; }
.last-p { margin-left: 26px; }
.pre { margin-left: 32px; }
.profile { width: 203px; margin-left: 28px; }
.ok { width: 21px; height: 21px; margin: 0 10px 0 32px; border-radius: 50%; background: #5fa653; }
.errors { width: 126px; color: #fff; }
.hscroll { display: flex; align-items: center; align-self: stretch; flex: 1; margin-left: 10px; padding: 0 10px; background: #2a2a2a; }
.hscroll i { width: 665px; height: 24px; margin-left: 392px; border-radius: 12px; background: #474747; }
.hscroll .rt { margin-left: auto; }
.split { color: var(--icon); }
.status .split { margin: 0 36px 0 8px; }

.docks { display: flex; flex-direction: column; flex: none; width: 834px; border-left: 2px solid var(--line); }
.dock-head { display: flex; height: 26px; padding: 5px 12px 0 50px; }
.dock-head svg:nth-child(2) { margin-left: 228px; }
.dock-head svg:nth-child(3) { margin-left: auto; }
.dock-body { display: flex; flex: 1; min-height: 0; }
.rail { display: flex; flex-direction: column; width: 81px; padding: 0 3px 0 2px; background: var(--dark); }
.rail::after { content: ""; flex: 1; background: var(--panel); border-top: 2px solid var(--line); }
.rg { padding: 4px 0 6px; background: var(--panel); border: solid var(--line); border-width: 2px 2px 0 0; color: var(--icon); }
.rg button { display: flex; align-items: center; justify-content: center; width: 100%; height: 57px; }
.rg .grip { margin-bottom: 4px; }
.rg svg { width: 38px; height: 38px; }
.script-a { font: italic 700 40px/40px "Liberation Serif", serif; }

.ptabs { display: flex; height: 54px; }
.ptab { display: flex; align-items: center; gap: 9px; padding: 0 22px 0 15px; font-size: 22px; font-weight: 700; color: #e6e6e6; background: var(--panel); border-top: 2px solid var(--line); white-space: nowrap; }
.ptab.off { padding: 0 6px 0 24px; border: solid var(--line); border-width: 2px 2px 2px 0; background: none; color: #9a9a9a; }
.pfill { display: flex; flex: 1; align-items: center; justify-content: flex-end; padding-right: 11px; border: solid var(--line); border-width: 2px 0 2px 2px; background: var(--dark); }
.ud { width: 12px; height: 26px; color: #9a9a9a; }
.mn { width: 20px; height: 16px; color: #a0a0a0; }
.pages { display: flex; flex-direction: column; width: 241px; border-right: 2px solid var(--line); background: var(--panel); }
.masters { height: 128px; padding-top: 8px; border-bottom: 4px solid #404040; }
.masters div { display: flex; align-items: flex-start; justify-content: space-between; height: 58px; padding: 0 42px 0 7px; }
.masters span { line-height: 36px; }
.mthumb { width: 69px; height: 48px; background: #fff; border: 1px solid #999; }
.mthumb.m2 { background: linear-gradient(90deg, #222 0 45%, #36a 45% 50%, #222 50% 80%, #fff 80% 84%, #1a9a50 84% 92%, #333 92%) 1px 41px / 65px 5px no-repeat #fff; }
.pages-row { display: flex; flex: 1; min-height: 0; overflow: hidden; }
.pagelist { width: 215px; padding: 16px 48px 0 33px; overflow: hidden; background: conic-gradient(from -37deg at 50% 100%, #999 74deg, transparent 0) 76px 4px / 18px 11px no-repeat; }
.pagelist li { display: flex; flex-direction: column; align-items: center; width: 103px; height: 128px; }
.pagelist svg { width: 103px; height: 72px; border: 2px solid #8e8e8e; background: #fff; }
.pagelist b { margin-top: 10px; padding: 0 6px; font-weight: 500; font-size: 20px; }
.pagelist .on svg { background: #93c2f5; }
.pagelist .on b { background: #2c8aee; font-weight: 700; }
.pscroll { display: flex; flex-direction: column; align-items: center; width: 24px; padding: 8px 0; background: #2a2a2a; }
.pscroll i { flex: 0 0 1440px; width: 22px; margin-top: 9px; border-radius: 11px; background: #474747; }
.pscroll .down { margin-top: auto; }
.pfoot { display: flex; align-items: center; height: 48px; padding: 0 48px 0 14px; gap: 30px; color: var(--icon); }
.pages-foot { height: 52px; gap: 0; padding: 0 46px 0 12px; justify-content: space-between; border-top: 2px solid var(--line); }
.dots { color: #fff; font-weight: 700; }
.pfoot .dim { margin: 0 -4px 0 -2px; color: #6c6c6c; }

.styles-col { display: flex; flex-direction: column; flex: 1; padding-left: 5px; }
.stylep { display: flex; flex-direction: column; background: var(--panel); border-bottom: 2px solid var(--line); }
.para { height: 990px; margin-bottom: 4px; }
.char { flex: 1; margin-bottom: 2px; }
.current { display: flex; align-items: center; height: 49px; padding: 3px 18px 0 10px; color: #fff; }
.current span { flex: 1; }
.current svg { color: var(--icon); margin-left: 30px; }
.slist { flex: 1; margin: 0 2px; border: 2px solid var(--rule); }
.slist li { display: flex; align-items: center; height: 44px; padding: 0 20px 0 67px; border-bottom: 1px solid #444; }
.slist button { flex: 1; height: 42px; text-align: left; }
.slist .on { background: #3e5169; font-weight: 700; }
.nopen { color: var(--icon); }
```
FILE: script.js
```js
const SVG = id => `<svg class="${id}"><use href="#${id}"/></svg>`;

// Timetable rows: the hour, then the minutes of each departure.
const hours = {
  5: "43 59", 6: "15 32 49 59", 7: "05 13 20 30 38 48 57", 8: "04 10 18 25 33 42 51", 9: "05 20 36 53",
  10: "08 28 43 55", 11: "08 21 32 44 56", 12: "09 22 35 48", 13: "00 12 24 36 49", 14: "02 14 26 38 52",
  15: "06 18 30 42 54", 16: "07 21 35 45 55", 17: "07 16 25 35 47 56", 18: "04 11 19 30 37 45 59",
  19: "15 25 35 44 58", 20: "10 23 39 54", 21: "07 20 38 52 22 12 32"
};
const tab = '<i class="tab">»</i>';
document.querySelectorAll(".timetable").forEach(t => {
  t.innerHTML = "<tbody>" + Object.entries(hours).map(([h, list]) => {
    const m = list.split(" ");
    const cells = m.map((v, i) => `<td>${v}${i < m.length - 1 || (m.length > 2 && m.length < 7) ? tab : ""}</td>`).join("");
    return `<tr><th scope="row">${tab}${h}${tab}</th>${cells}<td class="rest">${tab}<span class="eol">${h === "21" ? "#" : "¬"}</span></td></tr>`;
  }).join("") + "</tbody>";
});

// Stops: {t} trolleybus, {b} bus, {r} tram, {m} metro, {a} airport, {>} arrow.
const stops = [
  ["gone", "Ботанічний сад", null],
  ["gone", "вул. Болсуновська", "{b} 62, 76"],
  ["gone", "Печерський міст", "{t} 15, 38  {b} 62, 76, 137Н"],
  ["gone", "вул. Петра Болбочана", "{t} 15, 38  {b} 62, 76, 118, 137Н"],
  ["gone", "вул. Джона Маккейна", "{t} 15, 38  {b} 62, 76, 118, 137Н"],
  ["gone", "Кругла Башта", "{t} 15, 38  {b} 62, 76, 118, 137Н"],
  ["gone bold", "пл. Лесі Українки", "{m}{3} Печерська  {t} 15  {b} 118, 137Н"],
  ["gone", "Національний університет (КНУТД)", null],
  ["gone wide", "Музей «Київська фортеця", "{t} 15, {b} 118, 137Н"],
  ["gone", "вул. Госпітальна", "{t} 15  {b} 118, 137Н"],
  ["pill", "{m}{3} Палац спорту", null],
  ["wider", "вул. Саксаганського <em>(на вимогу)</em>", "{t} 3, 9, 40"],
  ["wide bold", "вул. Велика Васильківська", "{t} 3, 9, 12, 91Н  {b} 5, 20, 69, 137Н"],
  ["", "готель «Кооператор»", "{t} 3, 9, 12, 91Н  {b} 5, 69, 137Н"],
  ["", "вул. Паньківська", "{t} 3, 9, 12, 91Н  {b} 5, 69, 137Н"],
  ["", "вул. Льва Толстого", "{t} 12, 91Н  {b} 5, 137Н"],
  ["", "вул. Жилянська", "{t} 12, 91Н  {b} 5, 24А, 114А, 137Н"],
  ["term", "{s} Залізничний вокзал «Центральний»", null],
  ["sub", "", '<span class="gr">{m}</span><span class="rd">{1}</span> Вокзальна, {e} Київ-Центральний'],
  ["sub", "", '{b} 322, <span class="vi">{r}</span><span class="vi"> КВЕх </span>{>} {a} Бориспіль (KBP), {t} 9 {>} {a} Київ (IEV)'],
  ["sub", "", "{r} Т1 , Т3  {r} 15, 18"]
];
const icons = {
  t: SVG("trolley"), b: SVG("bus"), r: SVG("tram"), m: SVG("metro"), a: SVG("plane"), s: SVG("station"),
  e: '<svg class="rail-e"><use href="#rail"/></svg>', ">": SVG("arrow"),
  1: '<span class="disc"><span>M1</span></span>', 3: '<span class="disc"><span>M3</span></span>'
};
const draw = s => s.replace(/\{(.)\}/g, (_, k) => icons[k]);
document.querySelector(".stops").innerHTML = stops.map(([cls, name, routes], i) => {
  const end = `<b class="m">${i === 20 ? "#" : "¶"}</b>`;
  if (cls === "pill" || cls === "term") return `<li><div class="${cls}" data-hidden>${draw(name)}${end}</div></li>`;
  if (cls === "sub") return `<li class="sub">${tab}<span class="r" data-hidden>${draw(routes)}${end}</span></li>`;
  if (!routes) return `<li class="${cls}" data-hidden><span>${name}</span>${end}</li>`;
  return `<li class="${cls}" data-hidden><span class="lead"><span>${name}</span>${i === 5 ? tab : ""}${tab}</span><span class="r">${draw(routes)}${end}</span></li>`;
}).join("");

const range = Array.from({ length: 18 }, (_, i) => i);
document.querySelector(".col-marks").innerHTML = "<ol>" + range.map(i => `<li>${i === 17 ? "#" : "¶"}</li>`).join("") + "</ol>";
document.querySelector(".col-line").innerHTML = "<ol>" + range.map(i => {
  const c = [i >= 10 ? "ahead" : "", i === 10 ? "here" : "", i === 0 ? "start" : "", i === 17 ? "end" : ""].join(" ");
  return `<li class="${c}"><i></i><b>${i === 17 ? "#" : "¶"}</b></li>`;
}).join("") + "</ol>";

// Hidden characters: a dot in each space of the marked blocks.
document.querySelectorAll("[data-hidden]").forEach(root => {
  const walker = document.createTreeWalker(root, NodeFilter.SHOW_TEXT);
  const nodes = [];
  while (walker.nextNode()) nodes.push(walker.currentNode);
  nodes.forEach(n => {
    if (n.data.includes("\n") && !n.data.trim()) { n.remove(); return; }
    if (!n.data.includes(" ")) return;
    const wrap = document.createElement("span");
    wrap.innerHTML = n.data.replace(/ /g, '<span class="sp"> </span>');
    n.replaceWith(wrap);
  });
});

// Small seeded generator for the thumbnails and the code pattern.
const random = seed => () => (seed = (seed * 16807) % 2147483647) / 2147483647;
const rect = (x, y, w, h, c) => `<rect x="${x}" y="${y}" width="${w}" height="${h}" fill="${c}"/>`;

document.querySelector(".pagelist").innerHTML = Array.from({ length: 14 }, (_, n) => {
  const rnd = random(n * 97 + 11), on = n === 0;
  const ink = on ? "#103f78" : "#000", pale = on ? "#7fb0e2" : "#c3c9ce";
  let s = rect(4, 2, 8, 4, ink) + rect(14, 2, 32, 4, ink) + rect(60, 2, 24 + rnd() * 13, 4, ink);
  if (n > 2) s += rect(12, 2, 8, 4, "#3bab4f");
  for (const x of [4, 32]) {
    s += rect(x, 8, 7, 1, "#1c5f80") + rect(x, 9.500, 25, .500, pale);
    for (let i = 0; i < 17; i++) s += rect(x, 12 + i * 2.700, 10 + rnd() * 14, 1.700, ink);
  }
  const past = n > 2 && n < 8 ? 1 : 9;
  for (let i = 0; i < 19; i++) s += rect(65, 8 + i * 2.200, 10 + rnd() * 22, 1.500, i < past ? pale : ink);
  s += rect(59, 7, 1, 53, "#5b87c6") + rect(46, 0, 14, 21, on ? "#93c2f5" : "#fff") + (on ? rect(45, 1, 15, 20, "#fff") : "");
  s += rect(4, 60, 92, 1, "#666") + rect(4, 62, 28, 6, ink) + rect(32, 64, 14, 4, ink) + rect(40, 65, 6, 1, "#3a6cc0") + rect(52, 62, 29, 6, ink);
  s += rect(83, 62, 8, 2, "#1a9a50") + rect(83, 65, 8, 1, "#e87a3c") + rect(92, 62, 6, 6, "#555");
  return `<li class="${on ? "on" : ""}"><svg viewBox="0 0 101 70">${s}<text x="46" y="19" font-size="20" font-weight="500" fill="#000">A</text></svg><b>${n + 1}</b></li>`;
}).join("");

const rnd = random(4242), N = 33;
let code = "";
const finder = (x, y) => rect(x, y, 7, 7, "#000") + rect(x + 1, y + 1, 5, 5, "#fff") + rect(x + 2, y + 2, 3, 3, "#000");
for (let y = 0; y < N; y++) for (let x = 0; x < N; x++) {
  if ((x < 8 || x > N - 9) && y < 8 || x < 8 && y > N - 9) continue;
  if (rnd() > .5) code += rect(x, y, 1, 1, "#000");
}
document.querySelector(".qr").innerHTML = code + finder(0, 0) + finder(N - 7, 0) + finder(0, N - 7);
```
